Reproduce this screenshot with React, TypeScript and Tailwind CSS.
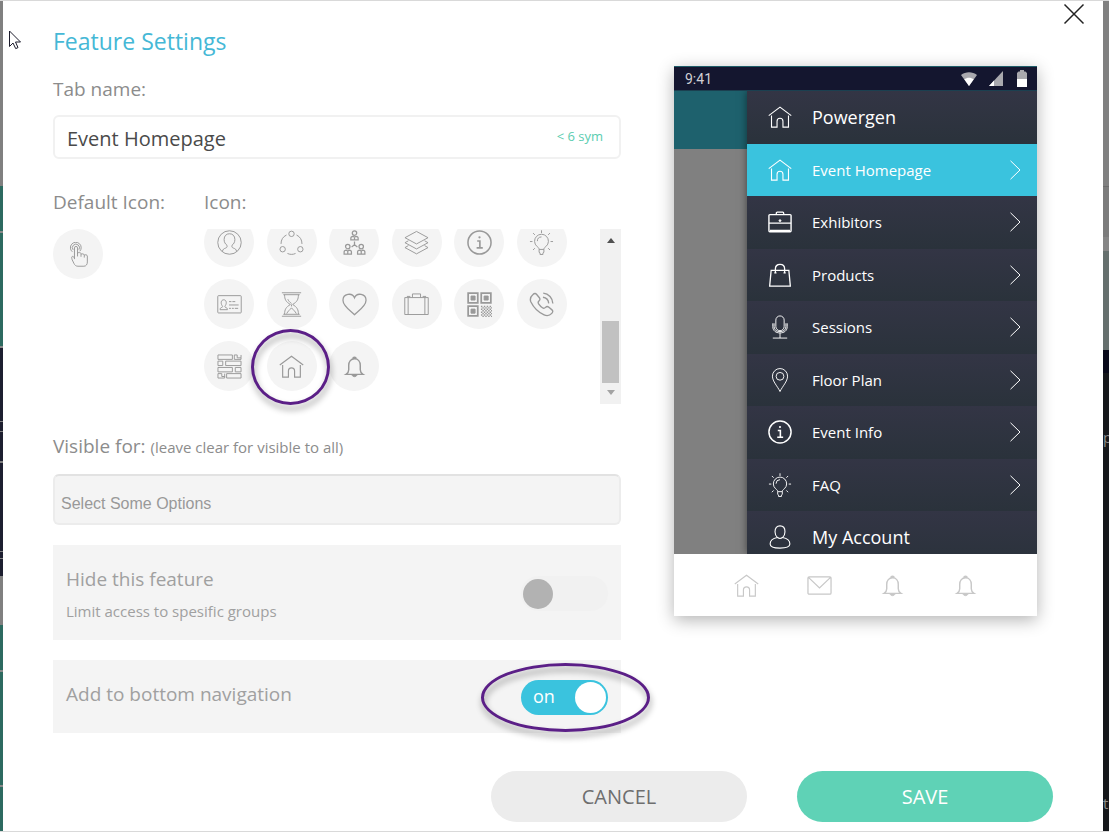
import { useState } from "react"
import type { ReactNode } from "react"
import clsx from "clsx"

// All line icons live on a 26x26 grid
const icons: Record<string, ReactNode> = {
  touch: (
    <>
      <path d="M6.600 10.200a5.600 5.600 0 1 1 7.800-.6" />
      <path d="M7.400 8.200a3.700 3.700 0 1 1 6 -.2" />
      <path d="M8.800 17.800V6.200a1.600 1.600 0 0 1 3.200 0v6.200M12 15v-3.400c0-.9 3.600-.9 3.600.6v3.200M15.600 12.800c.6-.9 3.400-.6 3.400.8v2.600M19 13.600c.9-.7 3.200-.3 3.200 1v6.200c0 2.400-1.200 4.400-3.600 4.400h-6.200c-2 0-3.200-1-4.200-3l-1.800-3.800c-.5-1.400-.8-3.200.2-3.400 1-.2 1.600.6 2.200 1.800" />
    </>
  ),
  user: (
    <>
      <circle cx="13" cy="13" r="12.200" />
      <path d="M5.600 22.400c.4-2.600 1.800-3 3.200-3.500 1.600-.6 2-1.400 1.600-3-1.800-1.300-3-3.300-3-6 0-3.800 2.300-6 5.600-6s5.600 2.200 5.600 6c0 2.700-1.200 4.700-3 6-.4 1.600 0 2.400 1.600 3 1.400.5 2.800.9 3.200 3.500" />
    </>
  ),
  share: (
    <>
      <circle cx="13" cy="4" r="2.800" />
      <circle cx="3.800" cy="20" r="2.800" />
      <circle cx="22.200" cy="20" r="2.800" />
      <path d="M2.100 14.500C2.100 10.200 4 7 7.800 5.200M18.200 5.200c3.800 1.800 5.700 5 5.700 9.300M8.800 24.400c2.800 1.300 5.600 1.300 8.400 0" />
    </>
  ),
  org: (
    <g strokeWidth="1.300">
      <circle cx="13" cy="3.200" r="2.300" />
      <path d="M9.200 10.200V8.600c0-1.600 1.200-2 2.400-2l1.400 1 1.400-1c1.200 0 2.400.4 2.400 2v1.600zM13 7.600v2.600" />
      <circle cx="6" cy="17.200" r="2.300" />
      <path d="M2.200 25v-2c0-1.600 1.200-2.200 2.400-2.200L6 22l1.400-1.200c1.200 0 2.400.6 2.400 2.200v2zM6 22v3" />
      <circle cx="20" cy="17.200" r="2.300" />
      <path d="M16.200 25v-2c0-1.600 1.200-2.200 2.400-2.200L20 22l1.400-1.200c1.200 0 2.400.6 2.400 2.200v2zM20 22v3" />
      <path d="M13 12v4M13 15.400l-3 2.200M13 15.400l3 2.200" />
    </g>
  ),
  layers: (
    <path d="M13 1.500 25 8 13 14.500 1 8zM4.600 11.200 1 13.200l12 6.500 12-6.500-3.600-2M4.600 16.200 1 18.300l12 6.500 12-6.500-3.600-2.100" />
  ),
  info: (
    <>
      <circle cx="13" cy="13" r="12" strokeWidth="1.600" />
      <path d="M10.600 11.400h2.800v7M10 18.600h6.400" strokeWidth="1.700" />
      <circle cx="13" cy="7.600" r="1.200" fill="currentColor" stroke="none" />
    </>
  ),
  bulb: (
    <>
      <path d="M10.500 20.200c0-1.600-.9-2-2.300-3.200a7.200 7.200 0 1 1 9.600 0c-1.400 1.200-2.300 1.600-2.300 3.200zM8.700 11.600a4.400 4.400 0 0 1 4.300-4.400M10.500 20.200v3l1 .6v1.700h3v-1.700l1-.6v-3" />
      <path d="M13 .3v2.900M4.200 3.200l1.900 1.900M21.800 3.200l-1.900 1.900M1 12h2.600M22.400 12H25M4.200 20.800l1.900-1.900M21.800 20.800l-1.900-1.900" />
    </>
  ),
  idcard: (
    <>
      <rect x=".8" y="3.800" width="24.400" height="18" rx=".8" />
      <path d="M3.200 18.400c0-1.800.8-2.100 2.200-2.500.6-.4.500-1-.1-1.800-1.600-2.300-1.200-6 1.700-6s3.300 3.700 1.700 6c-.6.800-.7 1.400-.1 1.800 1.400.4 2.200.7 2.200 2.500z" />
      <path d="M12.500 10h2.500M16 10h3M12.500 13.500h10M12.500 17h2M15.500 17h2M18.500 17h3.500" />
    </>
  ),
  hourglass: (
    <path d="M3 .8h20M4.500 2.800h17M3 25.200h20M4.500 23.200h17M5.800 2.800c0 5 1.400 7.400 6 10.200-4.600 2.800-6 5.200-6 10.200M20.200 2.800c0 5-1.400 7.400-6 10.200 4.600 2.800 6 5.200 6 10.200M9.200 7.500c.6 1.600 1.800 3 3.800 4.400M8 22.500c1.200-2.600 3-3.600 5-6 2 2.400 3.800 3.400 5 6M13 13v2" />
  ),
  heart: (
    <path
      d="M13 23.600C9 19.600 1 14.800 1 8.600c0-7 9.600-8.400 12-2.600 2.400-5.800 12-4.400 12 2.600 0 6.200-8 11-12 15z"
      strokeWidth="1.300"
    />
  ),
  suitcase: (
    <>
      <path d="M.8 5.800h24.400v17.600H.8zM4.300 5.800v17.600M21.700 5.800v17.600M3 4.600h3.600M19.400 4.600H23" />
      <path d="M8.800 5.800V2h8.400v3.800" />
    </>
  ),
  qr: (
    <>
      <path d="M1.200 1.200h10v10h-10zM14.800 1.200h10v10h-10zM1.200 14.800h10v10h-10z" strokeWidth="1.800" />
      <path d="M4.200 4.200h4.200v4.200H4.200zM17.800 4.200H22v4.200h-4.200zM4.200 17.800h4.200V22H4.200z" fill="currentColor" />
      <path d="M14.500 15H26M14.500 18H26M14.500 21H26M14.500 24H26" strokeWidth="1.500" strokeDasharray="1.500 1.500" />
      <path d="M16 16.500h10M16 19.500h10M16 22.500h10M16 25.500h10" strokeWidth="1.500" strokeDasharray="1.500 1.500" />
    </>
  ),
  phone: (
    <path
      d="M4.200 2.600c1.300-1.300 2.600-1.400 3.600-.3l3 3.700c.9 1.200.7 2.200-.3 3.200-1.300 1.200-1.300 2-.5 3.200 1.100 1.600 2.500 3 4 4 1.200.8 2 .8 3.200-.4 1-1 2-1.200 3.200-.3l3.500 2.900c1.200 1 1 2.300-.2 3.600-2 2.200-4.600 3.100-8 1.600C9.400 20.900 5 16.600 2 10.400.6 7.200 1.600 4.800 4.200 2.600zM14.500 5.500a7 7 0 0 1 6 6.300M14.800 1.200a11 11 0 0 1 10 10.800"
      strokeWidth="1.400"
    />
  ),
  bricks: (
    <>
      <path d="M1 1h15v4.600H1zM18 1h3v3h4V1M18 1v4.600h7V4M1 7.400h5V12H1zM9 7.400h16V12H9z" />
      <path d="M1 14h15v4.600H1zM19 14h6v4.600h-6zM1 20.400h4v3h3v-3M1 20.400V25h7v-2M10 20.400h15V25H10z" />
    </>
  ),
  home: <path d="M.8 11.500 13 2.300l12.200 9.200M3.800 11.400V24h6v-6.400a3.200 3.200 0 0 1 6.400 0V24h6V11.400" strokeWidth="1.200" />,
  bell: (
    <>
      <path
        d="M4.200 21.200c2-1.300 2.800-2.400 2.800-4.800v-4.600c0-4 2.300-6.800 6-6.800s6 2.800 6 6.800v4.600c0 2.400.8 3.500 2.800 4.800zM11.300 5.200c0-2.400 3.400-2.400 3.400 0"
        strokeWidth="1.500"
      />
      <path d="M10.400 21.600c.4 2.600 4.800 2.600 5.200 0z" fill="currentColor" />
    </>
  ),
  briefcase: (
    <>
      <rect x="1" y="5" width="24" height="18.500" rx="1" strokeWidth="1.500" />
      <path d="M9 5V3.400c0-.7.400-1 1-1h6c.6 0 1 .3 1 1V5M1 14.200h24M2 22h22" strokeWidth="1.400" />
      <circle cx="13" cy="11.500" r="1" fill="currentColor" />
    </>
  ),
  bag: (
    <path
      d="M3.400 8h19.200l1.600 17H1.800zM8 11.500V6.200c0-6.400 10-6.400 10 0v5.300M6.800 10.800h2.400M16.800 10.800h2.400"
      strokeWidth="1.400"
    />
  ),
  mic: (
    <>
      <rect x="8.500" y="1" width="9" height="16" rx="4.500" />
      <path d="M5.200 9v3.600c0 4.400 3.200 6.800 7.800 6.800s7.800-2.400 7.800-6.800V9M6.600 9v3.600c0 3.600 2.600 5.400 6.400 5.400s6.400-1.800 6.400-5.400V9M13 19.400V25M5.200 25h15.600" />
    </>
  ),
  pin: (
    <>
      <path d="M13 25.500C10.500 20 4.800 14.600 4.800 8.800a8.200 8.200 0 0 1 16.400 0C21.200 14.600 15.500 20 13 25.500z" />
      <circle cx="13" cy="9" r="4.200" />
    </>
  ),
  account: (
    <>
      <path d="M10.300 13.600C8.400 12 7.600 9.800 7.600 7.200 7.600 3.400 9.600 1 13 1s5.400 2.400 5.400 6.200c0 2.600-.8 4.800-2.700 6.400-1.400 1-4 1-5.400 0z" strokeWidth="1.200" />
      <path d="M10.300 13.600c-4.800.8-8 3.300-8 6.900 0 2.800 3.600 4.500 10.700 4.500s10.700-1.700 10.700-4.500c0-3.600-3.200-6.100-8-6.900" strokeWidth="1.200" />
    </>
  ),
  mail: <path d="M2.300 4h21.400c.8 0 1.300.5 1.300 1.300v15.400c0 .8-.5 1.300-1.300 1.300H2.300c-.8 0-1.300-.5-1.300-1.300V5.300C1 4.500 1.500 4 2.300 4zM1.500 4.500 13 15.500l11.500-11" strokeWidth="1.300" />,
}

function Icon({ name, className = "size-[25px]" }: { name: string; className?: string }) {
  return (
    <svg viewBox="0 0 26 26" className={clsx("shrink-0", className)} fill="none" stroke="currentColor" strokeWidth="1" aria-hidden="true">
      {icons[name]}
    </svg>
  )
}

const pickerIcons = [
  "user", "share", "org", "layers", "info", "bulb",
  "idcard", "hourglass", "heart", "suitcase", "qr", "phone",
  "bricks", "home", "bell",
]

const menuItems = [
  { icon: "home", label: "Powergen", heading: true },
  { icon: "home", label: "Event Homepage", active: true },
  { icon: "briefcase", label: "Exhibitors" },
  { icon: "bag", label: "Products" },
  { icon: "mic", label: "Sessions" },
  { icon: "pin", label: "Floor Plan" },
  { icon: "info", label: "Event Info" },
  { icon: "bulb", label: "FAQ" },
  { icon: "account", label: "My Account", heading: true },
]

const bottomNav = ["home", "mail", "bell", "bell"]

function Highlight({ className }: { className: string }) {
  return (
    <span
      className={clsx(
        "pointer-events-none absolute rounded-[50%] border-[3px] border-[#5b1f87] drop-shadow-[1px_5px_3px_rgba(0,0,0,0.4)]",
        className
      )}
    />
  )
}

function Toggle({ id, checked, onChange }: { id: string; checked: boolean; onChange: () => void }) {
  return (
    <span
      className={clsx(
        "relative flex h-[35px] w-[87px] shrink-0 items-center rounded-full",
        checked ? "justify-between bg-[#3ac3de] pr-[2px] pl-3" : "bg-[#f1f1f1] pl-[2px]"
      )}
    >
      {checked && <span className="pb-1 text-lg leading-6 text-white">on</span>}
      <span className={clsx("rounded-full", checked ? "size-[31px] bg-white" : "size-[30px] bg-[#b2b2b2]")} />
      <input
        id={id}
        type="checkbox"
        checked={checked}
        onChange={onChange}
        className="absolute inset-0 cursor-pointer appearance-none"
      />
    </span>
  )
}

function IconPicker() {
  const [selected, setSelected] = useState("home")

  return (
    <div className="relative flex h-[175px]">
      <div className="flex-1 overflow-hidden">
        <div className="-mt-3 grid w-[375px] grid-cols-6 gap-y-3">
          {pickerIcons.map((name) => (
            <button
              key={name}
              type="button"
              aria-label={name}
              aria-pressed={selected === name}
              onClick={() => setSelected(name)}
              className="flex size-[50px] items-center justify-center rounded-full bg-[#f4f4f4] text-[#999]"
            >
              <Icon name={name} />
            </button>
          ))}
        </div>
      </div>
      <div className="flex w-[21px] flex-col items-center bg-[#f1f1f1] py-[9px]">
        <svg viewBox="0 0 8 5" className="h-[5px] w-2 fill-[#505050]" aria-hidden="true">
          <path d="M4 0 8 5H0z" />
        </svg>
        <div className="mt-auto mb-[7px] h-[62px] w-[17px] bg-[#c1c1c1]" />
        <svg viewBox="0 0 8 5" className="h-[5px] w-2 fill-[#a3a3a3]" aria-hidden="true">
          <path d="M0 0h8L4 5z" />
        </svg>
      </div>
      <Highlight className="top-[100px] left-[47px] h-[76px] w-[79px]" />
    </div>
  )
}

function PhonePreview() {
  return (
    <div className="mr-4 w-[363px] shrink-0 border-t border-[#1f5d69] shadow-[0_4px_16px_rgba(0,0,0,0.3)]">
      <div className="flex h-6 items-center border-b border-[#1b4050] bg-[#14162f] pr-[10px] pl-[11px] text-[#d0d0d4]">
        <span className="font-['Roboto',sans-serif] text-sm leading-5">9:41</span>
        <svg viewBox="0 0 16 14" className="ml-auto h-[14px] w-4" aria-hidden="true">
          <path d="M0 3C4.500-.7 11.500-.7 16 3L8 14z" fill="#a9a9ae" />
          <path d="M3.300 7.300c2.800-2.200 6.600-2.200 9.400 0L8 14z" fill="#fff" />
        </svg>
        <svg viewBox="0 0 14 15" className="ml-3 h-[15px] w-[14px]" aria-hidden="true">
          <path d="M14 0v15H0z" fill="#a9a9ae" />
          <path d="M5 9.600V15H0z" fill="#fff" />
        </svg>
        <svg viewBox="0 0 10 17" className="ml-[14px] h-[17px] w-[10px]" aria-hidden="true">
          <path d="M3 0h4v1.500h1.500L10 3v14H0V3l1.500-1.500H3z" fill="#a9a9ae" />
          <path d="M0 9h10v8H0z" fill="#fff" />
        </svg>
      </div>

      <div className="flex h-[463px] overflow-hidden bg-[#808080]">
        <div className="h-[58px] flex-1 bg-[#1e616d]" />
        <nav className="w-[290px] shadow-[0_0_8px_rgba(0,0,0,0.5)]">
          {menuItems.map((item) => (
            <a
              key={item.label}
              href="#"
              className={clsx(
                "flex items-center pr-4 pl-[21px] text-white odd:h-[53px] odd:pb-[2px] even:h-[52px]",
                item.active ? "bg-[#3ac3de]" : "bg-linear-to-b from-[#333545] to-[#2a323b]"
              )}
            >
              <Icon name={item.icon} className="size-6" />
              <span className={clsx("ml-5 leading-6", item.heading ? "text-lg" : "text-[15px]")}>{item.label}</span>
              {!item.heading && (
                <svg viewBox="0 0 12 20" className="ml-auto h-5 w-3" fill="none" stroke="currentColor" strokeWidth="1" aria-hidden="true">
                  <path d="m1.500 .8 9.500 9.200-9.500 9.200" />
                </svg>
              )}
            </a>
          ))}
        </nav>
      </div>

      <div className="relative flex h-[62px] justify-center gap-12 bg-white pt-[19px] text-[#c8c8c8]">
        {bottomNav.map((name, index) => (
          <Icon key={index} name={name} />
        ))}
      </div>
    </div>
  )
}

export default function App() {
  const [tabName, setTabName] = useState("Event Homepage")
  const [hidden, setHidden] = useState(false)
  const [inBottomNav, setInBottomNav] = useState(true)

  return (
    <div className="relative flex min-h-screen flex-col bg-white font-['Open_Sans',sans-serif] text-[#8c8c8c]">
      <div className="flex border-y border-[#d9d9d9]">
        {/* page behind the dialog, left edge */}
        <div className="flex w-[3px] shrink-0 flex-col overflow-hidden bg-[#2d6a60]">
          <div className="h-[185px] bg-[#808080]" />
          <div className="h-[47px] border-b-2 border-[#8a8a8a]" />
          <div className="h-[115px] border-b-2 border-[#8a8a8a]" />
          <div className="h-[74px] border-b border-[#808080] bg-[#1d1f30]" />
          <div className="h-[10px] border-b border-[#808080] bg-[#1d1f30]" />
          <div className="h-[31px] border-b-2 border-[#808080] bg-[#1d1f30]" />
          <div className="h-[89px] border-b border-[#808080] bg-[#1d1f30]" />
          <div className="h-[7px] border-b border-[#808080] bg-[#1d1f30]" />
          <div className="h-[17px] bg-[#1d1f30]" />
          <div className="h-[49px] bg-[#808080]" />
          <div className="h-[47px] border-b-2 border-[#8a8a8a]" />
          <div className="h-[115px] border-b-2 border-[#8a8a8a]" />
        </div>

        <main className="relative flex-1 px-[50px] pt-6 pb-[9px]">
          <button type="button" aria-label="Close" className="absolute top-[2px] right-[18px] text-[#222]">
            <svg viewBox="0 0 22 22" className="size-[22px]" fill="none" stroke="currentColor" strokeWidth="1.500" aria-hidden="true">
              <path d="m1.500 1.500 19 19M20.500 1.500l-19 19" />
            </svg>
          </button>

          <div className="flex gap-[53px]">
            <div className="flex-1">
              <h1 className="text-[23px] leading-8 text-[#45b8d6]">Feature Settings</h1>

              <label htmlFor="tab-name" className="mt-[18px] block text-[19px] leading-7">
                Tab name:
              </label>
              <div className="mt-3 flex h-11 items-center rounded-md border-2 border-[#f1f1f1] pr-4 pl-3">
                <input
                  id="tab-name"
                  value={tabName}
                  onChange={(e) => setTabName(e.target.value)}
                  className="min-w-0 flex-1 pt-1 text-xl leading-7 text-[#4a4a4a] outline-none"
                />
                <span className="pb-[2px] text-[13px] leading-5 text-[#5bcdb0]">&lt; 6 sym</span>
              </div>

              <div className="mt-[29px] flex">
                <div className="w-[151px]">
                  <p className="text-[19px] leading-7">Default Icon:</p>
                  <div className="mt-[13px] flex size-[50px] items-center justify-center rounded-full bg-[#f4f4f4] text-[#999]">
                    <Icon name="touch" />
                  </div>
                </div>
                <div className="flex-1">
                  <p className="mb-[13px] text-[19px] leading-7">Icon:</p>
                  <IconPicker />
                </div>
              </div>

              <label htmlFor="visible-for" className="mt-7 block text-[19px] leading-7">
                Visible for: <span className="text-[15px]">(leave clear for visible to all)</span>
              </label>
              <select
                id="visible-for"
                className="mt-[13px] block h-[51px] w-full appearance-none rounded-md border-2 border-[#ececec] border-t-[#e2e2e2] bg-[#f4f4f4] pt-2 pl-[6px] font-['Liberation_Sans',sans-serif] text-base leading-6 text-[#999]"
              >
                <option>Select Some Options</option>
              </select>

              <div className="mt-5 flex justify-between bg-[#f4f4f4] px-[13px] pt-5 pb-[17px] text-[#a0a0a0]">
                <label htmlFor="hide-feature">
                  <span className="block text-[19px] leading-7">Hide this feature</span>
                  <span className="mt-[6px] block text-[15px] leading-6">Limit access to spesific groups</span>
                </label>
                <div className="pt-[11px]">
                  <Toggle id="hide-feature" checked={hidden} onChange={() => setHidden(!hidden)} />
                </div>
              </div>

              <div className="relative mt-5 flex justify-between bg-[#f4f4f4] px-[13px] pt-5 pb-[18px] text-[#a0a0a0]">
                <label htmlFor="bottom-nav" className="text-[19px] leading-7">
                  Add to bottom navigation
                </label>
                <Toggle id="bottom-nav" checked={inBottomNav} onChange={() => setInBottomNav(!inBottomNav)} />
                <Highlight className="top-[3px] -right-[29px] h-[69px] w-[169px]" />
              </div>
            </div>

            <div className="pt-[41px]">
              <PhonePreview />
            </div>
          </div>

          <div className="mt-[38px] flex justify-end gap-[50px]">
            <button type="button" className="h-[51px] w-64 rounded-full bg-[#ececec] text-xl text-[#6e6e6e]">
              CANCEL
            </button>
            <button type="button" className="h-[51px] w-64 rounded-full bg-[#5fd2b6] text-xl text-white">
              SAVE
            </button>
          </div>
        </main>

        {/* page behind the dialog, right edge */}
        <div className="flex w-[6px] shrink-0 flex-col overflow-hidden bg-[#16181c] text-[#8c8c8c]">
          <div className="h-[186px] border-b border-[#6c6c6c] bg-[#808080]" />
          <div className="h-[50px] bg-[#7c7c7c]" />
          <div className="h-[14px] bg-[#868686]" />
          <div className="h-[99px] bg-[#66706e]" />
          <div className="h-[23px] bg-[#0a0b1c]" />
          <div className="h-[366px] pt-[52px] text-[15px] leading-6">p</div>
          <div className="pt-[52px] text-[15px] leading-6">t</div>
        </div>
      </div>

      <svg viewBox="0 0 12 20" className="pointer-events-none absolute top-[30px] left-[9px] h-5 w-3" aria-hidden="true">
        <path d="M.5 1v15.500L4 13l2.700 5.600 2.300-1L6.500 12h5z" fill="#fff" stroke="#1a1a2a" strokeWidth="1" />
      </svg>
    </div>
  )
}
